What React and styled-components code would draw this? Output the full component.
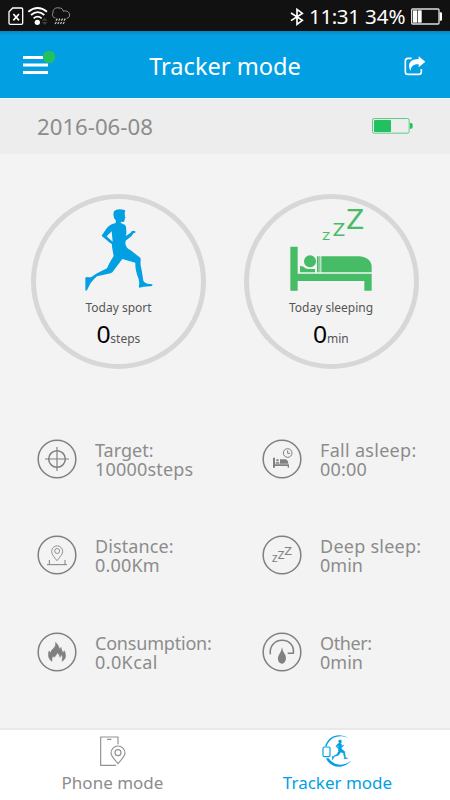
import styled, { createGlobalStyle, ThemeProvider } from 'styled-components'

const theme = {
  primary: '#039fe3',
  green: '#23c05f',
  bed: '#47bc66',
  background: '#f3f3f3',
  bar: '#ededed',
  ring: '#d7d7d7',
  icon: '#808080',
  text: '#8c8c8c',
}

const GlobalStyle = createGlobalStyle`
  * {
    box-sizing: border-box;
  }

  body {
    margin: 0;
    font-family: 'Noto Sans', 'Open Sans', sans-serif;
  }

  svg {
    display: block;
    flex: none;
    overflow: visible;
  }
`

const Screen = styled.div`
  display: flex;
  flex-direction: column;
  width: 450px;
  height: 800px;
  overflow: hidden;
  background: ${(props) => props.theme.background};
`

const StatusBar = styled.div`
  display: flex;
  justify-content: space-between;
  height: 31px;
  padding: 2px 8px 0;
  background: #111;
  color: #fff;
`

const StatusGroup = styled.div`
  display: flex;
  align-items: center;
  gap: ${(props) => props.$gap}px;
`

const StatusText = styled.span`
  font-size: 20.5px;
  line-height: 29px;
  letter-spacing: ${(props) => props.$spacing || 0}px;
  white-space: nowrap;
`

const Header = styled.header`
  display: grid;
  grid-template-columns: 60px 1fr 60px;
  align-items: center;
  height: 67px;
  background: linear-gradient(#0585be, ${(props) => props.theme.primary} 4px);
  color: #fff;
`

const HeaderIcon = styled.div`
  display: flex;
  justify-content: ${(props) => (props.$end ? 'flex-end' : 'flex-start')};
  padding: ${(props) => (props.$end ? '2px 24px 0 0' : '0 0 4px 23px')};
`

const Title = styled.h1`
  margin: 0;
  font-size: 23.6px;
  font-weight: 400;
  line-height: 34px;
  padding-top: 2px;
  text-align: center;
`

const DateBar = styled.div`
  display: flex;
  align-items: center;
  justify-content: space-between;
  height: 56px;
  padding: 0 37px;
  background: ${(props) => props.theme.bar};
  color: ${(props) => props.theme.text};
  font-size: 22.2px;
  border-top: 1px solid #f8f8f8;
`

const BatteryWrapper = styled.div`
  padding-bottom: 2px;
`

const Rings = styled.section`
  display: flex;
  gap: 37.5px;
  height: 256.4px;
  padding: 39.5px 0 0 31px;
`

const Ring = styled.div`
  display: flex;
  flex-direction: column;
  align-items: center;
  width: 175px;
  height: 175px;
  padding-top: 10px;
  border: 5px solid ${(props) => props.theme.ring};
  border-radius: 50%;
`

const RingLabel = styled.div`
  margin-top: 9px;
  color: #555;
  font-size: 12px;
  line-height: 16px;
`

const RingValue = styled.div`
  display: flex;
  align-items: baseline;
  margin-top: 7.5px;
  color: #555;
  font-size: 12px;
  line-height: 24px;
`

const RingNumber = styled.span`
  color: #000;
  font-family: 'Liberation Sans', sans-serif;
  font-size: 24.5px;
`

const Stats = styled.section`
  display: grid;
  grid-template-columns: 1fr 1fr;
  grid-auto-rows: 96.5px;
  flex: 1;
`

const Stat = styled.div`
  display: flex;
  align-items: center;
  gap: 18px;
  padding-left: 37px;
`

const StatText = styled.div`
  padding-top: 2px;
  color: ${(props) => props.theme.text};
  font-size: 18px;
  line-height: 19px;
  white-space: nowrap;
`

const StatLine = styled.div`
  letter-spacing: ${(props) => props.$spacing || 0}px;
`

const TabBar = styled.nav`
  display: grid;
  grid-template-columns: 1fr 1fr;
  height: 72px;
  border-top: 2px solid #e9e9e9;
  background: #fff;
`

const Tab = styled.div`
  display: flex;
  flex-direction: column;
  align-items: center;
  gap: 4px;
  padding-top: 6px;
  color: ${(props) => (props.$active ? props.theme.primary : props.theme.text)};
  font-size: 17px;
  line-height: 24px;
`

const Zed = styled.text`
  font-family: 'DejaVu Sans', sans-serif;
  fill: currentColor;
  stroke: currentColor;
  stroke-width: 0.5px;
`

const GreenArt = styled.svg`
  color: ${(props) => props.theme.bed};
`

const RoundIcon = styled.svg.attrs({
  width: 40,
  height: 40,
  viewBox: '0 0 120 120',
  fill: 'none',
  stroke: 'currentColor',
  strokeWidth: 4.5,
})`
  color: ${(props) => props.theme.icon};
`

function SimIcon() {
  return (
    <svg width="16" height="19" viewBox="0 0 48 57" fill="none" stroke="#fff">
      <path d="M14 3H40Q44 3 44 7V48Q44 52 40 52H7Q3 52 3 48V14Z" strokeWidth="4" />
      <path d="M16 21L33 40M33 21L16 40" strokeWidth="5" />
    </svg>
  )
}

function WifiIcon() {
  return (
    <svg width="20" height="19" viewBox="0 0 60 57" fill="none" stroke="#fff" strokeWidth="5.5">
      <path d="M1 14Q29-8 57 14M9 24Q29 7 49 24M17 34Q29 24 41 34" />
      <circle cx="28" cy="46" r="8" fill="#fff" stroke="none" />
      <path d="M41 41L50 32L59 41ZM41 45L50 54L59 45Z" fill="#3d3d3d" stroke="none" />
    </svg>
  )
}

function RainIcon() {
  return (
    <svg width="18" height="19" viewBox="0 0 54 57" fill="none" stroke="#aaa" strokeWidth="2.5">
      <path d="M10 33C2 31-1 24 3 18C1 7 12 0 21 3C29 2 33 7 34 13C44 9 53 16 53 24C53 30 49 33 44 34" />
      <path d="M16 35L12 41M24 35L20 41M32 35L28 41M40 35L36 41M13 45L9 51M21 45L17 51M29 45L25 51M37 45L33 51" strokeWidth="3.5" stroke="#ccc" />
    </svg>
  )
}

function BluetoothIcon() {
  return (
    <svg width="14" height="18" viewBox="0 0 42 54" fill="none" stroke="#fff" strokeWidth="5">
      <path d="M3 15L37 37L21 49V4L37 16L3 38" />
    </svg>
  )
}

function PhoneBattery() {
  return (
    <svg width="31" height="18" viewBox="0 0 93 54">
      <rect x="2" y="3" width="82" height="45" rx="3" fill="none" stroke="#ddd" strokeWidth="4" />
      <rect x="6" y="7" width="12" height="37" fill="#fff" />
      <rect x="20" y="7" width="12" height="37" fill="#fff" />
      <path d="M86 13H90Q93 13 93 16V35Q93 38 90 38H86Z" fill="#fff" />
    </svg>
  )
}

function MenuIcon() {
  return (
    <svg width="33" height="25" viewBox="0 0 33 25">
      <path d="M0 7.5H25M0 15H25M0 22.5H25" stroke="#fff" strokeWidth="2.8" />
      <circle cx="26" cy="7" r="6.2" fill="#23c05f" />
    </svg>
  )
}

function ShareIcon() {
  return (
    <svg width="22" height="20" viewBox="0 0 66 60">
      <path d="M23 7H12Q4 7 4 15V47Q4 55 12 55H44Q52 55 52 47V39" fill="none" stroke="#fff" strokeWidth="5" />
      <path d="M44 1L64 17L44 34V25C28 24 21 31 20 45C7 23 21 9 44 9Z" fill="#fff" />
    </svg>
  )
}

function TrackerBattery() {
  return (
    <svg width="41" height="16" viewBox="0 0 123 48">
      <rect x="1.5" y="1.5" width="110" height="44" rx="5" fill="none" stroke="#59cc85" strokeWidth="3" />
      <rect x="6" y="6" width="51" height="36" rx="3" fill="#23c05f" />
      <path d="M114 15H117Q122 15 122 20V27Q122 32 117 32H114Z" fill="#23c05f" />
    </svg>
  )
}

const runnerPath =
  'M266 77C272 70 285 69 298 73Q301 75 298 81L299 94Q302 97 299 98L297 106Q296 110 287 108L286 112Q299 116 302 123Q304 138 302 151L315 142L319 137Q327 133 331 139Q331 142 324 143L319 151L301 165L300 174Q303 188 315 193L343 215Q347 218 346 225Q344 237 349 254L354 285Q357 291 366 294L381 296Q383 301 374 302L355 303L342 306Q339 302 342 294L340 280Q329 253 330 231L291 220L261 260Q257 264 249 264L215 272Q204 281 196 292L184 315L180 314V276Q184 272 188 275L197 275L215 263L245 248Q251 233 265 211L260 183V176Q250 169 243 162L230 152Q228 149 233 144L243 129Q250 120 259 116L271 112L272 105Q264 98 264 86ZM259 137L244 152L257 164L262 168Z'

function RunnerIcon() {
  return (
    <svg width="68" height="82" viewBox="179 70 204 246">
      <path d={runnerPath} fill="#039fe3" fillRule="evenodd" />
    </svg>
  )
}

function BedIcon() {
  return (
    <GreenArt width="82" height="82" viewBox="157 70 246 246">
      <Zed x="326" y="129" fontSize="78">Z</Zed>
      <Zed x="285" y="150" fontSize="54">Z</Zed>
      <Zed x="254" y="163" fontSize="34">Z</Zed>
      <g fill="currentColor">
        <path d="M158 183H180V264H402V315H380V286H180V315H158Z" />
        <circle cx="217" cy="227" r="18" />
        <path d="M187 241Q191 241 198 243Q203 250 216 250H232V260H187Z" />
        <path d="M238 212H243V260H238ZM245 212H248V260H245ZM251 212H366Q402 216 402 245V260H251Z" />
      </g>
    </GreenArt>
  )
}

function TargetIcon() {
  return (
    <RoundIcon>
      <circle cx="60" cy="60" r="56.5" />
      <circle cx="60" cy="60" r="25" />
      <path d="M24 60H96M60 24V96" strokeWidth="3.5" />
    </RoundIcon>
  )
}

function DistanceIcon() {
  return (
    <RoundIcon>
      <circle cx="60" cy="60" r="56.5" />
      <path d="M60 77C50 65 44 57 44 49A16.5 16.5 0 0 1 77 49C77 57 70 65 60 77Z" strokeWidth="2.5" />
      <circle cx="60.5" cy="48" r="7.5" strokeWidth="2.5" />
      <path d="M30 89H90M37 88V75M84 88V75" strokeWidth="3" />
    </RoundIcon>
  )
}

function FlameIcon() {
  return (
    <RoundIcon>
      <circle cx="60" cy="60" r="56.5" />
      <path
        d="M45 88C34 81 32 69 36 57L42 63C41 57 45 53 50 49Q57 43 56 31Q65 39 68 52L72 46Q74 57 78 62L82 56C89 71 86 82 75 88Q78 74 74 67L69 76Q67 67 61 62Q57 71 52 76L48 72Q43 79 45 88Z"
        fill="currentColor"
        stroke="currentColor"
        strokeWidth="1.5"
      />
    </RoundIcon>
  )
}

function FallAsleepIcon() {
  return (
    <RoundIcon>
      <circle cx="60" cy="60" r="56.5" />
      <circle cx="77" cy="42" r="13" strokeWidth="3" />
      <path d="M77 34V43H84" strokeWidth="3" />
      <path
        d="M33 56H39V76H81V86H77V81H39V86H33ZM41 74V70H52V74ZM43 67V61H50V67ZM54 74V61H70Q79 63 79 74Z"
        fill="currentColor"
        stroke="none"
      />
    </RoundIcon>
  )
}

function DeepSleepIcon() {
  return (
    <RoundIcon>
      <circle cx="60" cy="60" r="56.5" />
      <Zed x="30" y="82" fontSize="24">Z</Zed>
      <Zed x="47" y="72" fontSize="29">Z</Zed>
      <Zed x="67" y="60" fontSize="34">Z</Zed>
    </RoundIcon>
  )
}

function GaugeIcon() {
  return (
    <RoundIcon>
      <circle cx="60" cy="60" r="56.5" />
      <path d="M25 67C22 43 38 25 60 25C83 25 97 42 94 64H77" />
      <path d="M60 46Q62 58 68 66C76 76 71 95 60 95C48 95 44 78 52 67Q58 59 60 46Z" fill="currentColor" stroke="none" />
    </RoundIcon>
  )
}

function PhoneModeIcon() {
  return (
    <svg width="26" height="31" viewBox="0 0 78 93" fill="none" stroke="#929292" strokeWidth="3.5">
      <path d="M54 25V3H2V88H48M21 10H34" />
      <path d="M54 83C42 69 33 60 33 51A21 21 0 0 1 75 51C75 60 66 69 54 83Z" />
      <circle cx="54" cy="50" r="9" />
    </svg>
  )
}

function TrackerModeIcon() {
  return (
    <svg width="32" height="31" viewBox="0 0 96 93" fill="none" stroke="#039fe3" strokeWidth="3.5">
      <path d="M79 6C47-7 22 7 14 31L9 31C20-2 51-10 79 6ZM12 67L20 67C34 87 61 94 88 74C65 101 26 98 12 67Z" fill="#039fe3" stroke="none" />
      <rect x="3" y="33" width="21" height="29" rx="4" />
      <g transform="translate(31 12) scale(0.225 0.24) translate(-180 -70)">
        <path d={runnerPath} fill="#039fe3" stroke="#039fe3" strokeWidth="8" />
      </g>
    </svg>
  )
}

const stats = [
  { label: 'Target:', value: '10000steps', Icon: TargetIcon, valueSpacing: 0.2 },
  { label: 'Fall asleep:', value: '00:00', Icon: FallAsleepIcon, labelSpacing: 0.3, valueSpacing: 0.2 },
  { label: 'Distance:', value: '0.00Km', Icon: DistanceIcon, labelSpacing: 0.1, valueSpacing: 0.2 },
  { label: 'Deep sleep:', value: '0min', Icon: DeepSleepIcon, labelSpacing: 0.25 },
  { label: 'Consumption:', value: '0.0Kcal', Icon: FlameIcon, labelSpacing: -0.2, valueSpacing: 0.4 },
  { label: 'Other:', value: '0min', Icon: GaugeIcon, labelSpacing: -0.4 },
]

export default function App() {
  return (
    <ThemeProvider theme={theme}>
      <GlobalStyle />
      <Screen>
        <StatusBar>
          <StatusGroup $gap={4}>
            <SimIcon />
            <WifiIcon />
            <RainIcon />
          </StatusGroup>
          <StatusGroup $gap={5.5}>
            <BluetoothIcon />
            <StatusText $spacing={-0.4}>11:31</StatusText>
            <StatusText>34%</StatusText>
            <PhoneBattery />
          </StatusGroup>
        </StatusBar>
        <Header>
          <HeaderIcon>
            <MenuIcon />
          </HeaderIcon>
          <Title>Tracker mode</Title>
          <HeaderIcon $end>
            <ShareIcon />
          </HeaderIcon>
        </Header>
        <DateBar>
          <span>2016-06-08</span>
          <BatteryWrapper>
            <TrackerBattery />
          </BatteryWrapper>
        </DateBar>
        <Rings>
          <Ring>
            <RunnerIcon />
            <RingLabel>Today sport</RingLabel>
            <RingValue>
              <RingNumber>0</RingNumber>steps
            </RingValue>
          </Ring>
          <Ring>
            <BedIcon />
            <RingLabel>Today sleeping</RingLabel>
            <RingValue>
              <RingNumber>0</RingNumber>min
            </RingValue>
          </Ring>
        </Rings>
        <Stats>
          {stats.map(({ label, value, Icon, labelSpacing, valueSpacing }) => (
            <Stat key={label}>
              <Icon />
              <StatText>
                <StatLine $spacing={labelSpacing}>{label}</StatLine>
                <StatLine $spacing={valueSpacing}>{value}</StatLine>
              </StatText>
            </Stat>
          ))}
        </Stats>
        <TabBar>
          <Tab>
            <PhoneModeIcon />
            Phone mode
          </Tab>
          <Tab $active>
            <TrackerModeIcon />
            Tracker mode
          </Tab>
        </TabBar>
      </Screen>
    </ThemeProvider>
  )
}
